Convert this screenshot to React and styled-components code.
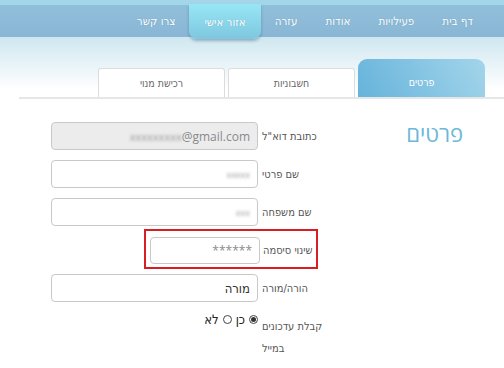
import React from "react";
import styled, { createGlobalStyle } from "styled-components";

const hebrew = `"DejaVu Sans Condensed", "DejaVu Sans", "Liberation Sans", sans-serif`;

const GlobalStyle = createGlobalStyle`
  html, body {
    margin: 0;
    padding: 0;
    background: #fff;
  }
  body {
    font-family: "Open Sans", "Liberation Sans", "DejaVu Sans", sans-serif;
  }
`;

const Page = styled.div`
  width: 504px;
  height: 368px;
  direction: rtl;
  overflow: hidden;
  background: linear-gradient(#cfe7f0 37px, #ffffff 90px);
`;

const NavBar = styled.nav`
  height: 37px;
  box-sizing: border-box;
  border-top: 5px solid #a4d6e9;
  background: linear-gradient(#90bfdb, #89b6d4);
  display: flex;
  align-items: stretch;
  padding-right: 17px;
`;

const NavItem = styled.a`
  display: flex;
  align-items: center;
  justify-content: center;
  padding: 0 ${({ $active }) => ($active ? "15px" : "14px")};
  margin: ${({ $active }) => ($active ? "-1px 0 -2px" : "0")};
  font-family: ${hebrew};
  font-size: 11.5px;
  color: #fff;
  white-space: nowrap;
  text-shadow: 0 0 1px rgba(40, 90, 130, 0.3);
  background: ${({ $active }) =>
    $active ? "linear-gradient(#98e6f5, #7ec7df)" : "transparent"};
  border-radius: ${({ $active }) => ($active ? "0 0 8px 8px" : "0")};
  box-shadow: ${({ $active }) =>
    $active ? "0 2px 3px rgba(30, 70, 100, 0.35)" : "none"};
`;

const TabBar = styled.div`
  display: flex;
  align-items: flex-end;
  gap: 3px;
  height: 40px;
  margin-top: 20px;
  padding-right: 19px;
  border-bottom: 2px solid #e4e6e7;
  width: 466px;
`;

const Tab = styled.div`
  width: 127px;
  box-sizing: border-box;
  height: ${({ $active }) => ($active ? "38px" : "29px")};
  display: flex;
  align-items: center;
  justify-content: center;
  padding-top: ${({ $active }) => ($active ? "8px" : "0")};
  font-family: ${hebrew};
  font-size: 10.5px;
  color: ${({ $active }) => ($active ? "#fff" : "#666")};
  background: ${({ $active }) =>
    $active ? "linear-gradient(60deg, #66b3db, #a3d5ea)" : "#fff"};
  border: ${({ $active }) => ($active ? "none" : "1px solid #dcdcdc")};
  border-bottom: none;
  border-radius: ${({ $active }) => ($active ? "9px 9px 0 0" : "3px 3px 0 0")};
`;

const Main = styled.div`
  display: flex;
  padding-top: 21px;
`;

const TitleCol = styled.div`
  width: 172px;
  box-sizing: border-box;
  padding-right: 41px;
`;

const Title = styled.h2`
  margin: 0;
  font-size: 22px;
  font-weight: 400;
  color: #6db7da;
  line-height: 26px;
`;

const Form = styled.div`
  display: flex;
  flex-direction: column;
  gap: 10px;
  padding-top: 2px;
`;

const Row = styled.div`
  display: flex;
  align-items: ${({ $top }) => ($top ? "flex-start" : "center")};
  gap: 4px;
`;

const Label = styled.label`
  width: ${({ $width }) => $width || "70px"};
  flex-shrink: 0;
  text-align: left;
  white-space: nowrap;
  font-family: ${hebrew};
  font-size: 11px;
  color: #555;
  line-height: ${({ $top }) => ($top ? "22px" : "normal")};
  padding-top: ${({ $top }) => ($top ? "4px" : "0")};
`;

const Input = styled.div`
  width: ${({ $width }) => $width || "207px"};
  height: ${({ $height }) => $height || "28px"};
  box-sizing: border-box;
  border: 1px solid #c9c9c9;
  border-radius: 4px;
  background: ${({ $disabled }) => ($disabled ? "#ececec" : "#fff")};
  display: flex;
  align-items: center;
  padding: 0 7px;
  font-family: ${hebrew};
  font-size: 13px;
  color: ${({ $muted }) => ($muted ? "#8a8a8a" : "#333")};
`;

const Latin = styled.span`
  font-family: "Open Sans", "Liberation Sans", sans-serif;
  font-size: 12px;
  direction: ltr;
  unicode-bidi: isolate;
  display: inline-flex;
  align-items: center;
`;

const Blurred = styled.span`
  filter: blur(1.4px);
  color: #9a9a9a;
  direction: ltr;
  font-family: "Open Sans", "Liberation Sans", sans-serif;
  font-size: ${({ $size }) => $size || "11px"};
`;

const Highlight = styled.div`
  margin: -7px 14px -5px 0;
  width: 174px;
  box-sizing: border-box;
  border: 2px solid #d81d25;
  padding: 6px 3px 3px 3px;
  display: flex;
  align-items: center;
  gap: 3px;
`;

const Radios = styled.div`
  display: flex;
  align-items: center;
  gap: 4px;
  font-family: ${hebrew};
  font-size: 13px;
  color: #222;
`;

const Radio = styled.span`
  width: 9px;
  height: 9px;
  box-sizing: border-box;
  border: 1px solid #444;
  border-radius: 50%;
  display: inline-flex;
  align-items: center;
  justify-content: center;
  &::after {
    content: "";
    width: 5px;
    height: 5px;
    border-radius: 50%;
    background: ${({ $checked }) => ($checked ? "#333" : "transparent")};
  }
`;

const navItems = ["דף בית", "פעילויות", "אודות", "עזרה", "אזור אישי", "צרו קשר"];
const tabs = ["פרטים", "חשבוניות", "רכישת מנוי"];

export default function App() {
  return (
    <>
      <GlobalStyle />
      <Page>
        <NavBar>
          {navItems.map((item) => (
            <NavItem key={item} $active={item === "אזור אישי"}>
              {item}
            </NavItem>
          ))}
        </NavBar>
        <TabBar>
          {tabs.map((tab, i) => (
            <Tab key={tab} $active={i === 0}>
              {tab}
            </Tab>
          ))}
        </TabBar>
        <Main>
          <TitleCol>
            <Title>פרטים</Title>
          </TitleCol>
          <Form>
            <Row>
              <Label>כתובת דוא"ל</Label>
              <Input $disabled $muted>
                <Latin>
                  <Blurred>xxxxxxxxx</Blurred>@gmail.com
                </Latin>
              </Input>
            </Row>
            <Row>
              <Label>שם פרטי</Label>
              <Input>
                <Blurred $size="9px">xxxxx</Blurred>
              </Input>
            </Row>
            <Row>
              <Label>שם משפחה</Label>
              <Input>
                <Blurred $size="9px">xxx</Blurred>
              </Input>
            </Row>
            <Highlight>
              <Label $width="50px">שינוי סיסמה</Label>
              <Input $width="110px" $height="27px" $muted>
                <Latin>******</Latin>
              </Input>
            </Highlight>
            <Row>
              <Label>הורה/מורה</Label>
              <Input>מורה</Input>
            </Row>
            <Row $top>
              <Label $top>
                קבלת עדכונים
                <br />
                במייל
              </Label>
              <Radios>
                <Radio $checked />
                כן
                <Radio />
                לא
              </Radios>
            </Row>
          </Form>
        </Main>
      </Page>
    </>
  );
}
